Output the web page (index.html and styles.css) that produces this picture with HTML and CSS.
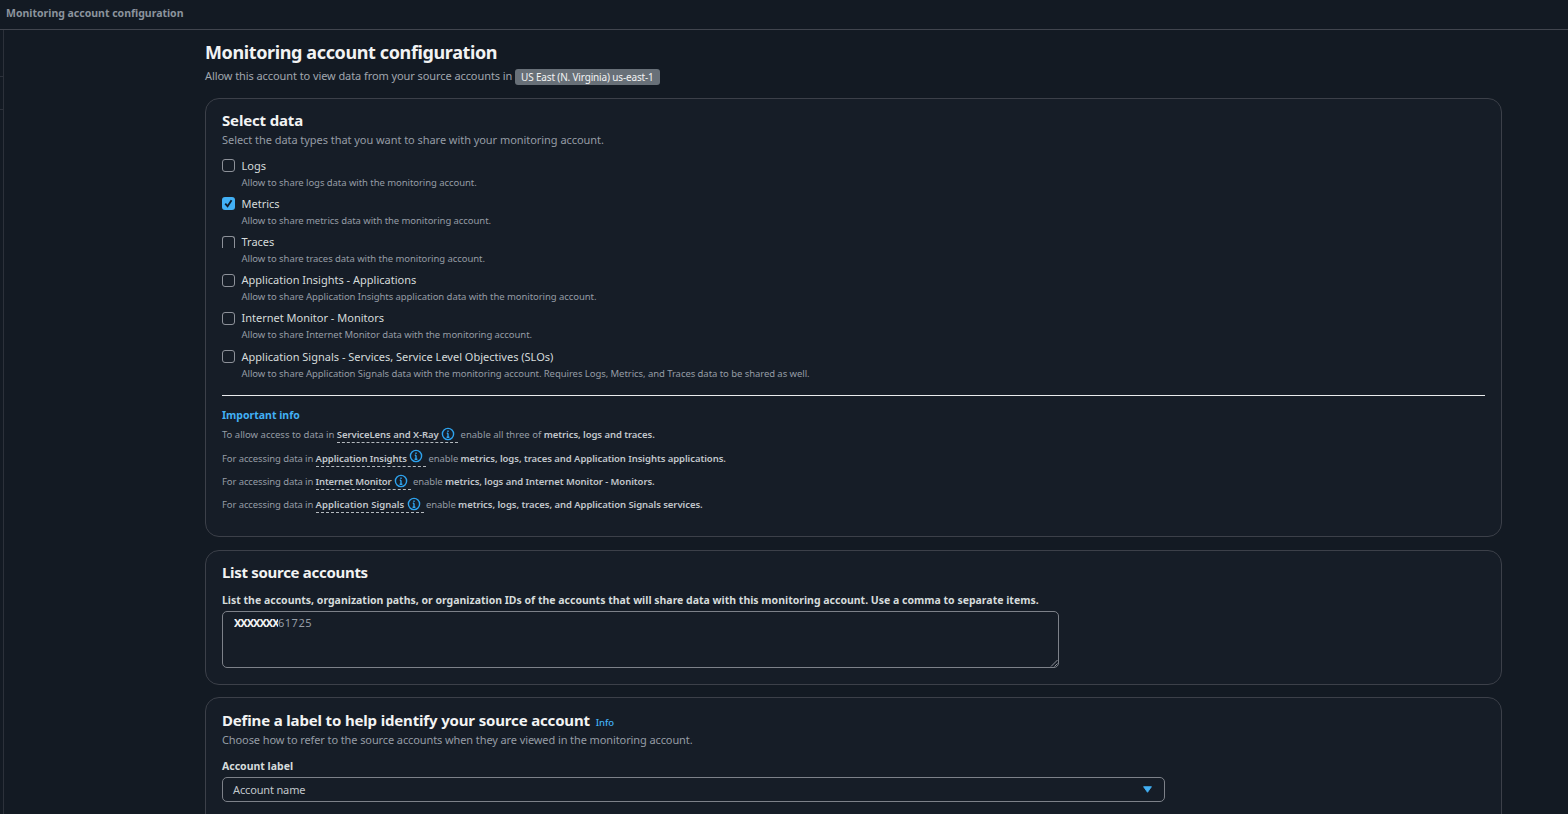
FILE: index.html
```html
<!DOCTYPE html>
<html>
<head>
<title>Monitoring account configuration</title>
<meta charset="UTF-8">
<link rel="stylesheet" href="styles.css">
</head>
<body>

<!-- top bar -->
<div class="topbar">Monitoring account configuration</div>

<div class="layout">
    <div class="rail">
        <div class="rail-line"><i></i><i></i></div>
    </div>

    <div class="content">
        <h1>Monitoring account configuration</h1>
        <p class="subtitle">Allow this account to view data from your source accounts in <span class="region">US East (N. Virginia) us-east-1</span></p>

        <!-- select data -->
        <section class="card card-data">
            <h2>Select data</h2>
            <p class="desc">Select the data types that you want to share with your monitoring account.</p>

            <div class="check-list">
                <div class="check">
                    <span class="box"></span>
                    <div><div class="check-name">Logs</div><div class="check-desc">Allow to share logs data with the monitoring account.</div></div>
                </div>
                <div class="check">
                    <span class="box checked"><svg width="13" height="13" viewBox="0 0 14 14"><path d="M3.5 7.2 L6 10 L10.3 3.6" fill="none" stroke="#0f1b2a" stroke-width="2"/></svg></span>
                    <div><div class="check-name">Metrics</div><div class="check-desc">Allow to share metrics data with the monitoring account.</div></div>
                </div>
                <div class="check">
                    <span class="box clipped"></span>
                    <div><div class="check-name">Traces</div><div class="check-desc">Allow to share traces data with the monitoring account.</div></div>
                </div>
                <div class="check">
                    <span class="box low"></span>
                    <div><div class="check-name">Application Insights - Applications</div><div class="check-desc">Allow to share Application Insights application data with the monitoring account.</div></div>
                </div>
                <div class="check">
                    <span class="box low"></span>
                    <div><div class="check-name">Internet Monitor - Monitors</div><div class="check-desc">Allow to share Internet Monitor data with the monitoring account.</div></div>
                </div>
                <div class="check">
                    <span class="box"></span>
                    <div><div class="check-name">Application Signals - Services, Service Level Objectives (SLOs)</div><div class="check-desc">Allow to share Application Signals data with the monitoring account. Requires Logs, Metrics, and Traces data to be shared as well.</div></div>
                </div>
            </div>

            <hr>

            <div class="info-title">Important info</div>
            <p class="info-line first">To allow access to data in <span class="term"><b>ServiceLens and X-Ray</b> <svg class="i" width="14" height="14" viewBox="0 0 14 14"><circle cx="7" cy="7" r="5.6"/><path d="M7 6.2V10.2M5.6 10.2H8.4M5.8 6.2H7"/><path d="M7 3.4V4.9"/></svg></span> enable all three of <b>metrics, logs and traces.</b></p>
            <p class="info-line">For accessing data in <span class="term"><b>Application Insights</b> <svg class="i raise" width="14" height="14" viewBox="0 0 14 14"><circle cx="7" cy="7" r="5.6"/><path d="M7 6.2V10.2M5.6 10.2H8.4M5.8 6.2H7"/><path d="M7 3.4V4.9"/></svg></span> enable <b>metrics, logs, traces and Application Insights applications.</b></p>
            <p class="info-line">For accessing data in <span class="term"><b class="narrow">Internet Monitor</b><svg class="i near" width="14" height="14" viewBox="0 0 14 14"><circle cx="7" cy="7" r="5.6"/><path d="M7 6.2V10.2M5.6 10.2H8.4M5.8 6.2H7"/><path d="M7 3.4V4.9"/></svg></span> enable <b>metrics, logs and Internet Monitor - Monitors.</b></p>
            <p class="info-line">For accessing data in <span class="term"><b class="wide">Application Signals</b> <svg class="i" width="14" height="14" viewBox="0 0 14 14"><circle cx="7" cy="7" r="5.6"/><path d="M7 6.2V10.2M5.6 10.2H8.4M5.8 6.2H7"/><path d="M7 3.4V4.9"/></svg></span> enable <b>metrics, logs, traces, and Application Signals services.</b></p>
        </section>

        <!-- source accounts -->
        <section class="card card-accounts">
            <h2>List source accounts</h2>
            <label class="field-label long">List the accounts, organization paths, or organization IDs of the accounts that will share data with this monitoring account. Use a comma to separate items.</label>
            <div class="textarea"><span class="masked">XXXXXXX</span><span class="digits">61725</span>
                <svg class="grip" width="8" height="8" viewBox="0 0 8 8"><path d="M1 7.5 L7.5 1M4.5 7.5 L7.5 4.5" stroke="#8d9199" fill="none"/></svg>
            </div>
        </section>

        <!-- label -->
        <section class="card card-label">
            <h2>Define a label to help identify your source account <a class="info">Info</a></h2>
            <p class="desc tight">Choose how to refer to the source accounts when they are viewed in the monitoring account.</p>
            <label class="field-label">Account label</label>
            <div class="select">Account name
                <svg width="9" height="7" viewBox="0 0 10 8"><path d="M0.5 0.8H9.5L5 7.2Z" fill="#42b0f5" stroke="#42b0f5" stroke-linejoin="round"/></svg>
            </div>
        </section>
    </div>
</div>

</body>
</html>
```

FILE: styles.css
```css
html, body {
    margin: 0;
    height: 814px;
    overflow: hidden;
}

body {
    background: #131a23;
    color: #d5dbdb;
    font-family: "Noto Sans", Roboto, sans-serif;
    font-size: 12px;
}

/* top bar */
.topbar {
    height: 29px;
    line-height: 27px;
    padding-left: 6px;
    font-size: 10.5px;
    font-weight: 700;
    color: #8b939d;
    border-bottom: 1px solid #41454e;
}

.layout {
    display: flex;
}

/* left rail */
.rail {
    width: 205px;
    flex: none;
}

.rail-line {
    width: 1px;
    height: 784px;
    margin-left: 3px;
    background: #2c313a;
    display: flex;
    flex-direction: column;
    gap: 32px;
    padding-top: 46px;
    box-sizing: border-box;
}

.rail-line i {
    display: block;
    width: 3px;
    height: 1px;
    margin-left: -3px;
    background: #2c313a;
}

.content {
    width: 1297px;
    flex: none;
}

h1 {
    margin: 10px 0 0;
    font-size: 18px;
    line-height: 24px;
    font-weight: 700;
    letter-spacing: -0.38px;
    color: #f2f3f3;
}

.subtitle {
    margin: 2px 0 0;
    height: 20px;
    line-height: 20px;
    font-size: 11px;
    letter-spacing: -0.08px;
    color: #a0a6ae;
}

.region {
    display: inline-block;
    height: 16px;
    line-height: 16px;
    padding: 0 6px;
    border-radius: 3px;
    background: #687078;
    color: #f2f3f3;
    font-size: 10px;
    letter-spacing: -0.16px;
    vertical-align: -1px;
}

/* card */
.card {
    box-sizing: border-box;
    background: #161d27;
    border: 1px solid #3c4049;
    border-radius: 14px;
    padding: 11px 16px 0;
}

.card-data {
    height: 439px;
    margin-top: 12px;
}

.card-accounts {
    height: 135px;
    margin-top: 13px;
}

.card-label {
    height: 140px;
    margin-top: 12px;
}

h2 {
    margin: 0;
    font-size: 15px;
    line-height: 20px;
    font-weight: 700;
    letter-spacing: -0.16px;
    color: #f2f3f3;
}

.card-accounts h2 {
    letter-spacing: -0.3px;
}

.desc {
    margin: 1px 0 0;
    font-size: 11px;
    line-height: 18px;
    letter-spacing: -0.05px;
    color: #959ca5;
}

.desc.tight {
    margin-top: -2px;
    letter-spacing: -0.1px;
}

/* check list */
.check-list {
    margin-top: 9px;
}

.check {
    display: flex;
    gap: 6.5px;
    height: 38px;
}

.check:last-child {
    margin-top: 1px;
}

.box {
    flex: none;
    box-sizing: border-box;
    width: 13px;
    height: 13px;
    margin-top: 1px;
    border: 1px solid #8d9199;
    border-radius: 3px;
}

.box.low {
    margin-top: 2px;
}

.box.checked {
    border: none;
    background: #42b0f5;
}

.box.checked svg {
    display: block;
}

.box.clipped {
    margin-top: 2px;
    height: 12px;
    border-bottom: none;
    border-radius: 3px 3px 0 0;
}

.check-name {
    font-size: 11px;
    line-height: 16px;
    color: #d5dbdb;
}

.check-desc {
    font-size: 9.5px;
    line-height: 16px;
    margin-top: 1px;
    letter-spacing: -0.06px;
    color: #959ca5;
}

hr {
    margin: 8px 0 0;
    border: none;
    border-top: 1px solid #e9ebed;
}

.info-title {
    margin-top: 11px;
    font-size: 10.5px;
    line-height: 16px;
    font-weight: 700;
    color: #42b0f5;
}

.info-line {
    margin: 0;
    height: 23.3px;
    line-height: 18px;
    font-size: 9.5px;
    letter-spacing: -0.1px;
    color: #959ca5;
}

.info-line.first {
    margin-top: 3px;
    letter-spacing: 0;
}

.info-line b {
    font-weight: 600;
    letter-spacing: -0.06px;
    color: #c2c7cc;
}

.info-line b.narrow {
    letter-spacing: -0.15px;
}

.info-line b.wide {
    letter-spacing: 0.05px;
}

.term {
    display: inline-block;
    line-height: 15px;
    padding-right: 3px;
    border-bottom: 1px dashed #b5babf;
}

.i {
    vertical-align: -3px;
    fill: none;
    stroke: #2ea3ee;
    stroke-width: 1.4;
}

.i.raise {
    vertical-align: -1px;
}

.i.near {
    margin-left: 2px;
}

/* form */
.field-label {
    display: block;
    font-size: 10.5px;
    line-height: 16px;
    font-weight: 700;
    color: #d5dbdb;
}

.field-label.long {
    margin-top: 10px;
}

.textarea {
    position: relative;
    box-sizing: border-box;
    width: 837px;
    height: 57px;
    margin-top: 3px;
    padding: 3px 11px;
    border: 1px solid #7d8189;
    border-radius: 5px;
    font-size: 11px;
    line-height: 16px;
    color: #959ca5;
}

.masked {
    display: inline-block;
    width: 44px;
    overflow: hidden;
    letter-spacing: -1px;
    color: #f2f3f3;
    font-weight: 700;
    vertical-align: top;
}

.digits {
    letter-spacing: 0.5px;
}

.grip {
    position: absolute;
    right: 0;
    bottom: 0;
}

.info {
    margin-left: 2px;
    font-size: 9.5px;
    font-weight: 500;
    letter-spacing: 0;
    color: #42b0f5;
}

.card-label {
    padding-top: 12px;
}

.card-label .field-label {
    margin-top: 9px;
}

.select {
    box-sizing: border-box;
    display: flex;
    align-items: center;
    justify-content: space-between;
    width: 943px;
    height: 25px;
    margin-top: 3px;
    padding: 0 12px 0 10px;
    border: 1px solid #7d8189;
    border-radius: 5px;
    font-size: 11px;
    letter-spacing: -0.15px;
    color: #c2c7cc;
}
```
